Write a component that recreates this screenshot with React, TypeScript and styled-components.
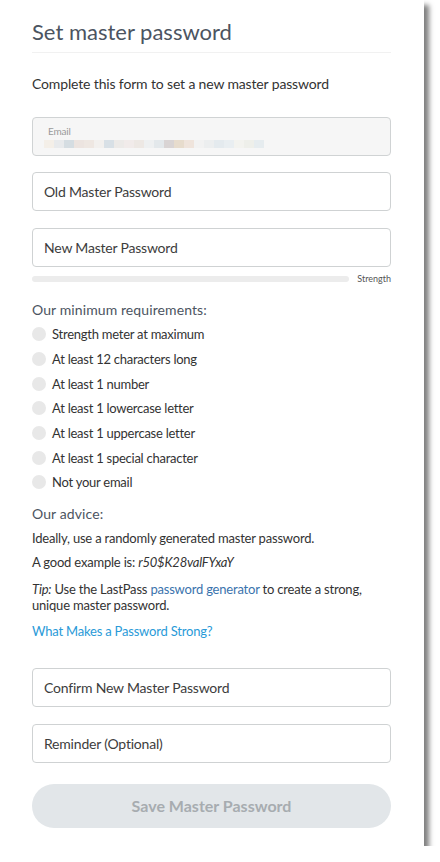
import React from 'react';
import styled, { createGlobalStyle } from 'styled-components';

const GlobalStyle = createGlobalStyle`
  html, body {
    margin: 0;
    padding: 0;
    background: #fff;
  }
  body {
    font-family: Lato, "Open Sans", Arial, sans-serif;
    color: #3a3a3a;
  }
`;

const Panel = styled.div`
  width: 424px;
  height: 846px;
  box-sizing: border-box;
  background: #fff;
  box-shadow: 5px 5px 5px rgba(0, 0, 0, 0.5);
  padding: 18px 33px 0 32px;
  display: flex;
  flex-direction: column;
`;

const Title = styled.h1`
  margin: 0;
  font-size: 22px;
  font-weight: 400;
  color: #4c5461;
  line-height: 28px;
  padding-bottom: 6px;
  border-bottom: 1px solid #f1f1f1;
`;

const Intro = styled.p`
  margin: 21px 0 0;
  font-size: 14px;
  line-height: 20px;
  color: #333;
  letter-spacing: -0.15px;
`;

const Field = styled.div<{ $disabled?: boolean; $top?: number }>`
  height: 39px;
  box-sizing: border-box;
  margin-top: ${p => p.$top ?? 17}px;
  border: 1px solid ${p => (p.$disabled ? '#d0d3d4' : '#cfd2d3')};
  border-radius: 4px;
  background: ${p => (p.$disabled ? '#f6f6f6' : '#fff')};
  display: flex;
  flex-direction: column;
  justify-content: center;
  padding: 0 11px;
  font-size: 14px;
  letter-spacing: -0.2px;
  color: #3d3d3d;
`;

const SmallLabel = styled.div`
  font-size: 10px;
  color: #9a9a9a;
  line-height: 12px;
  margin-left: 4px;
`;

const Blur = styled.div`
  display: flex;
  height: 8px;
  margin-top: 3px;
`;

const BlurCell = styled.span`
  width: 10px;
  height: 8px;
`;

const StrengthRow = styled.div`
  display: flex;
  align-items: center;
  gap: 8px;
  margin-top: 6px;
`;

const Bar = styled.div`
  flex: 1;
  height: 6px;
  border-radius: 3px;
  background: #ececec;
`;

const StrengthText = styled.span`
  font-size: 9px;
  color: #555;
`;

const SectionHead = styled.h2<{ $top: number }>`
  margin: ${p => p.$top}px 0 0;
  font-size: 14px;
  font-weight: 400;
  color: #4c5461;
  letter-spacing: 0.1px;
  line-height: 20px;
`;

const ReqList = styled.ul`
  list-style: none;
  margin: 2px 0 0;
  padding: 0;
`;

const Req = styled.li`
  display: flex;
  align-items: center;
  gap: 6px;
  height: 24.7px;
  font-size: 13px;
  letter-spacing: -0.25px;
  color: #333;
`;

const Dot = styled.span`
  width: 14px;
  height: 14px;
  border-radius: 50%;
  background: #e8e8e8;
  flex-shrink: 0;
`;

const Para = styled.p<{ $top?: number }>`
  margin: ${p => p.$top ?? 4}px 0 0;
  font-size: 13px;
  line-height: 16.5px;
  letter-spacing: -0.2px;
  color: #333;
  padding-right: 4px;
`;

const Link = styled.a<{ $light?: boolean }>`
  color: ${p => (p.$light ? '#2a9ad8' : '#3a73ad')};
  text-decoration: none;
`;

const SaveButton = styled.button`
  margin-top: 21px;
  height: 44px;
  border: none;
  border-radius: 22px;
  background: #e2e6e9;
  color: #a7acb0;
  font-family: Lato, "Open Sans", Arial, sans-serif;
  font-size: 16px;
  font-weight: 700;
`;

const blurColors = [
  '#f4efe8', '#e8eaec', '#d5dde2', '#ece4e0', '#eee7e2', '#f2f0ee', '#d8e0e6', '#eceae8',
  '#f1ebea', '#ede8e4', '#eef0f1', '#e3e8eb', '#d9d4d4', '#e7dccd', '#efe4dc', '#f2f2f2',
  '#eceeef', '#e4eaee', '#e9eef1', '#f3f3ef', '#eeefea', '#e6ecef',
];

const requirements = [
  'Strength meter at maximum',
  'At least 12 characters long',
  'At least 1 number',
  'At least 1 lowercase letter',
  'At least 1 uppercase letter',
  'At least 1 special character',
  'Not your email',
];

export default function App() {
  return (
    <>
      <GlobalStyle />
      <Panel>
        <Title>Set master password</Title>
        <Intro>Complete this form to set a new master password</Intro>

        <Field $disabled $top={23}>
          <SmallLabel>Email</SmallLabel>
          <Blur>
            {blurColors.map((c, i) => (
              <BlurCell key={i} style={{ background: c }} />
            ))}
          </Blur>
        </Field>
        <Field $top={16}>Old Master Password</Field>
        <Field>New Master Password</Field>
        <StrengthRow>
          <Bar />
          <StrengthText>Strength</StrengthText>
        </StrengthRow>

        <SectionHead $top={16}>Our minimum requirements:</SectionHead>
        <ReqList>
          {requirements.map(r => (
            <Req key={r}>
              <Dot />
              {r}
            </Req>
          ))}
        </ReqList>

        <SectionHead $top={9}>Our advice:</SectionHead>
        <Para $top={6}>Ideally, use a randomly generated master password.</Para>
        <Para $top={7.5}>
          A good example is: <i>r50$K28valFYxaY</i>
        </Para>
        <Para $top={10.5}>
          <i>Tip:</i> Use the LastPass <Link href="#">password generator</Link> to create a strong,
          unique master password.
        </Para>
        <Para $top={9.5}>
          <Link $light href="#">What Makes a Password Strong?</Link>
        </Para>

        <Field $top={28}>Confirm New Master Password</Field>
        <Field>Reminder (Optional)</Field>
        <SaveButton>Save Master Password</SaveButton>
      </Panel>
    </>
  );
}
